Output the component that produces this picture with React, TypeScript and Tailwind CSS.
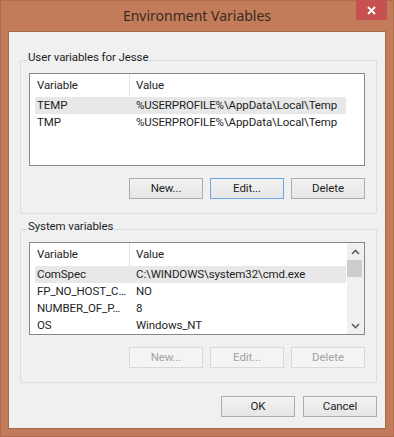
import React from "react";

const userVars = [
  { name: "TEMP", value: "%USERPROFILE%\\AppData\\Local\\Temp" },
  { name: "TMP", value: "%USERPROFILE%\\AppData\\Local\\Temp" },
];

const systemVars = [
  { name: "ComSpec", value: "C:\\WINDOWS\\system32\\cmd.exe" },
  { name: "FP_NO_HOST_C…", value: "NO" },
  { name: "NUMBER_OF_P…", value: "8" },
  { name: "OS", value: "Windows_NT" },
];

function Button({
  label,
  disabled,
  focused,
}: {
  label: string;
  disabled?: boolean;
  focused?: boolean;
}) {
  if (disabled) {
    return (
      <div className="w-[74px] h-[21px] flex items-center justify-center border border-[#d9d9d9] bg-[#f4f4f4] text-[#a3a3a3]">
        {label}
      </div>
    );
  }
  return (
    <div
      className={
        focused
          ? "w-[74px] h-[21px] flex items-center justify-center border border-[#6aa7e3] bg-gradient-to-b from-[#f2f2f2] to-[#e6e6e6] text-[#1e1e1e]"
          : "w-[74px] h-[21px] flex items-center justify-center border border-[#adadad] bg-gradient-to-b from-[#f2f2f2] to-[#e6e6e6] text-[#1e1e1e]"
      }
    >
      {label}
    </div>
  );
}

function Chevron({ up }: { up?: boolean }) {
  return (
    <svg width="9" height="6" viewBox="0 0 9 6">
      <path
        d={up ? "M1 5 L4.5 1.5 L8 5" : "M1 1 L4.5 4.5 L8 1"}
        fill="none"
        stroke="#606060"
        strokeWidth="1.6"
      />
    </svg>
  );
}

function VarList({
  rows,
  scroll,
}: {
  rows: { name: string; value: string }[];
  scroll?: boolean;
}) {
  return (
    <div className="w-[336px] h-[93px] border border-[#828790] bg-white flex overflow-hidden">
      <div className="w-[317px] flex flex-col">
        {/* header */}
        <div className="h-[23px] flex shrink-0 text-[#1e1e1e]">
          <div className="w-[99px] shrink-0 pl-[7px] flex items-center">Variable</div>
          <div className="w-px shrink-0 bg-[#e5e5e5]" />
          <div className="pl-[6px] flex items-center">Value</div>
        </div>
        {rows.map((r, i) => (
          <div
            key={r.name}
            className={
              i === 0
                ? "h-[17px] shrink-0 ml-[5px] w-[311px] flex items-center pt-px bg-[#e8e8e8] text-[#1e1e1e]"
                : "h-[17px] shrink-0 ml-[5px] w-[311px] flex items-center pt-px text-[#1e1e1e]"
            }
          >
            <div className="w-[101px] shrink-0 pl-[2px] whitespace-nowrap">{r.name}</div>
            <div className="whitespace-nowrap">{r.value}</div>
          </div>
        ))}
      </div>
      {scroll && (
        <div className="w-[17px] flex flex-col bg-[#f0f0f0]">
          <div className="h-[17px] flex items-center justify-center">
            <Chevron up />
          </div>
          <div className="h-[17px] w-[15px] bg-[#cdcdcd]" />
          <div className="flex-1" />
          <div className="h-[17px] flex items-center justify-center">
            <Chevron />
          </div>
        </div>
      )}
    </div>
  );
}

function GroupBox({
  title,
  rows,
  scroll,
  disabled,
}: {
  title: string;
  rows: { name: string; value: string }[];
  scroll?: boolean;
  disabled?: boolean;
}) {
  return (
    <div className="relative w-[357px] h-[154px] border border-[#dcdcdc] rounded-[2px] pt-[12px] pl-[8px]">
      <span className="absolute top-[-12px] left-[6px] px-[1px] leading-[16px] bg-[#f0f0f0] text-[#1e1e1e]">
        {title}
      </span>
      <div className="w-[336px] flex flex-col">
        <VarList rows={rows} scroll={scroll} />
        <div className="mt-[12px] flex justify-end gap-[7px]">
          <Button label="New..." disabled={disabled} />
          <Button label="Edit..." disabled={disabled} focused={!disabled} />
          <Button label="Delete" disabled={disabled} />
        </div>
      </div>
    </div>
  );
}

export default function App() {
  return (
    <div className="w-[394px] h-[437px] bg-[#c27c5a] border border-[#b06c4c] flex flex-col font-['Segoe_UI','Roboto',sans-serif] text-[11.5px] tracking-[-0.1px]">
      {/* title bar */}
      <div className="relative h-[30px] shrink-0 flex items-center justify-center">
        <span className="font-['Segoe_UI','Noto_Sans',sans-serif] text-[14px] tracking-normal text-[#3b2a22] -mt-[1px]">
          Environment Variables
        </span>
        <div className="absolute top-[-1px] right-[6px] w-[31px] h-[20px] bg-[#c75050] flex items-center justify-center">
          <svg width="9" height="9" viewBox="0 0 9 9">
            <path d="M1 1 L8 8 M8 1 L1 8" stroke="white" strokeWidth="1.8" />
          </svg>
        </div>
      </div>

      {/* client area */}
      <div className="mx-[7px] h-[398px] bg-[#f0f0f0] border border-[#a46a4d] flex flex-col pl-[11px] pt-[28px]">
        <GroupBox title="User variables for Jesse" rows={userVars} />
        <div className="mt-[15px]">
          <GroupBox title="System variables" rows={systemVars} scroll disabled />
        </div>
        <div className="w-[357px] mt-[13px] flex justify-end gap-[8px]">
          <Button label="OK" />
          <Button label="Cancel" />
        </div>
      </div>
    </div>
  );
}
